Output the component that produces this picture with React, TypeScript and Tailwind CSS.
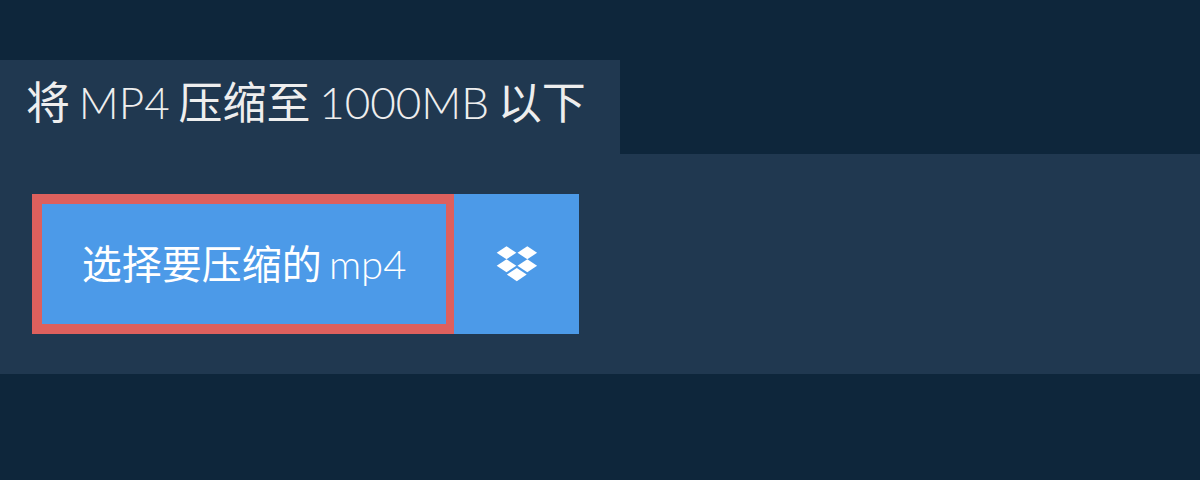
import { FC, JSX } from "react";

const DropboxIcon: FC = (): JSX.Element => (
    <svg width="42" height="36" viewBox="0 0 42 36" fill="currentColor">
        <path d="M.7 6.8 10.5.3l9.8 6.5-9.8 6.5z" />
        <path d="M21.5 6.8 31.3.3l9.8 6.5-9.8 6.5z" />
        <path d="M.7 19.8l9.8-6.5 9.8 6.5-9.8 6.5z" />
        <path d="M21.5 19.8l9.8-6.5 9.8 6.5-9.8 6.5z" />
        <path d="M10.9 28.6 20.8 22l9.9 6.6-9.9 6.7z" />
    </svg>
)

const App: FC = (): JSX.Element => {
    return (
        <div className="h-[480px] bg-[#0e263b] pt-[60px] font-['Lato','Noto_Sans_CJK_SC',sans-serif]">
            <h1 className="w-[620px] h-[94px] bg-[#203850] pl-[26px] pt-[12px] text-[44px] leading-[60px] font-normal whitespace-nowrap text-[#eeeeee] [word-spacing:-2.5px]">
                将 <span className="font-light">MP4</span> 压缩至 <span className="font-light">1000MB</span> 以下
            </h1>
            <div className="h-[220px] bg-[#203850] flex items-center pl-[32px]">
                <button className="w-[422px] h-[140px] bg-[#4c9ae8] border-[10px] border-r-[8px] border-[#dd605d] text-white text-[40px] whitespace-nowrap [word-spacing:-3px]">
                    选择要压缩的 <span className="font-light">mp4</span>
                </button>
                <button className="w-[125px] h-[140px] bg-[#4c9ae8] text-white flex items-center justify-center">
                    <DropboxIcon />
                </button>
            </div>
        </div>
    )
}

export default App
